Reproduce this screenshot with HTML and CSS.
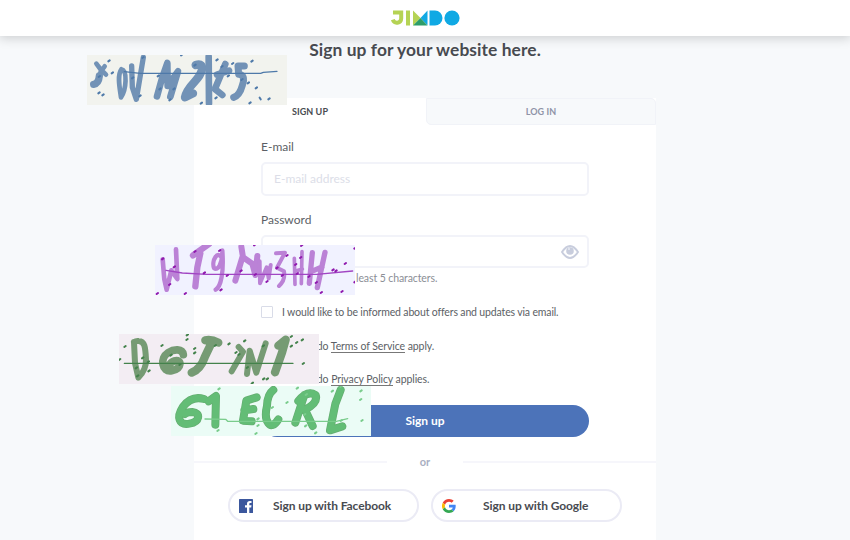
FILE: index.html
```html
<!DOCTYPE html>
<html lang="en">
<head>
<meta charset="utf-8">
<title>Jimdo</title>
<link rel="stylesheet" href="styles.css">
</head>
<body>
<header class="topbar">
<svg class="logo" viewBox="0 0 69 16" role="img" aria-label="Jimdo">
<path d="M2 2.500H10.200V8.500a4.300 4.300 0 0 1-8.400 1.200" fill="none" stroke="#b5d354" stroke-width="4"/>
<rect x="15" y=".5" width="4" height="15" fill="#b5d354"/>
<path d="M22 .5 29.500 8 22 15.500z" fill="#b5d354"/><path d="M36.500 .5V15.500L29.500 8z" fill="#10a9e4"/><path d="M29.500 8 36.500 15.500H22z" fill="#2d9d69"/>
<path d="M38.500 .5h5.500a7.500 7.500 0 0 1 0 15H38.500z" fill="#10a9e4"/><circle cx="61" cy="8" r="7.600" fill="#10a9e4"/>
</svg>
</header>
<main>
<h1><span>Sign up for your website here.</span></h1>
<section class="card">
<nav class="tabs"><a class="tab active">SIGN UP</a><a class="tab">LOG IN</a></nav>
<form class="form">
<label class="label">E-mail</label>
<div class="field"><span class="placeholder">E-mail address</span></div>
<label class="label second">Password</label>
<div class="field password"><svg class="eye" viewBox="0 0 18 14"><path d="M1 7Q9-5 17 7Q9 19 1 7Z" fill="none" stroke="#c8cddd" stroke-width="1.900"/><circle cx="9" cy="6" r="3.800" fill="#c8cddd"/><circle cx="8" cy="4" r="1" fill="#e9ebf3"/></svg></div>
<p class="hint">least 5 characters.</p>
<div class="consent"><i class="box"></i><span>I would like to be informed about offers and updates via email.</span></div>
<p class="legal terms">The Jimdo <a>Terms of Service</a> apply.</p>
<p class="legal privacy">The Jimdo <a>Privacy Policy</a> applies.</p>
<div class="submit"><span>Sign up</span></div>
</form>
<div class="or"><span>or</span></div>
<div class="social">
<div class="provider"><svg viewBox="0 0 14 14"><rect width="14" height="14" rx=".6" fill="#3b579d"/><path d="M8 14V8.500H6V6.300H8V4.700C8 3 9.100 2 10.800 2h1.700v2h-1c-.8 0-1.200.4-1.200 1v1.300h2.200L12.200 8.500h-1.900V14z" fill="#fff"/></svg><span>Sign up with Facebook</span></div>
<div class="provider google"><svg viewBox="0 0 48 48"><path fill="#ea4335" d="M24 9.500c3.540 0 6.710 1.220 9.210 3.600l6.850-6.850C35.900 2.380 30.470 0 24 0 14.620 0 6.510 5.380 2.560 13.220l7.980 6.190C12.430 13.720 17.740 9.500 24 9.500z"/><path fill="#4285f4" d="M46.980 24.550c0-1.570-.15-3.090-.38-4.550H24v9.020h12.940c-.58 2.960-2.260 5.480-4.780 7.180l7.730 6C44.400 38.020 46.980 31.840 46.980 24.550z"/><path fill="#fbbc05" d="M10.530 28.590A14.500 14.500 0 0 1 10.530 19.410L2.550 13.220a24 24 0 0 0 0 21.560z"/><path fill="#34a853" d="M24 48c6.480 0 11.930-2.130 15.890-5.810l-7.730-6c-2.150 1.450-4.920 2.300-8.160 2.300-6.260 0-11.570-4.220-13.470-9.910l-7.980 6.190C6.510 42.620 14.620 48 24 48z"/></svg><span>Sign up with Google</span></div>
</div>
</section>
</main>
<svg class="patch blue" viewBox="21 15 600 150">
<g class="brush"><path d="M49 41 61 57 78 74M74 49 62 65 58 82" stroke-width="14"/><path d="M58 78Q56 101 41 103" stroke-width="22"/><path d="M124 58C111 75 119 115 123 142C139 119 143 61 124 58"/><path d="M155 48 157 112 169 148 190 22" stroke-width="16"/><path d="M231 139 246 85 262 39 263 108 294 64 271 140" stroke-width="20"/><path d="M347 45Q371 38 365 62C359 91 322 105 315 142L339 130" stroke-width="25"/><path d="M386 20 387 160M407 112 436 42M411 74 447 62M406 118 427 135" stroke-width="20"/><path d="M493 48 474 48 476 73Q498 75 487 106Q479 136 461 142" stroke-width="21"/></g>
<path class="rule" d="M133 65 180 70H542L550 67 591 64"/>
<path class="dots" d="M85 34l4-3M95 70l4-3M56 81l4-3M55 130l4-3M67 136l4-3M156 85l4-3M178 139l4-3M187 24l4-3M303 16l4-3M233 79l4-3M238 118l4-3M280 118l4-3M268 151l4-3M343 47l4-3M362 161l4-3M409 31l4-3M424 51l4-3M443 79l4-3M406 145l4-3M456 42l4-3M514 35l4-3M484 90l4-3M503 100l4-3M527 115l4-3M508 160l4-3M539 143l3 5M565 148l4-3"/>
</svg>
<svg class="patch purple" viewBox="15 15 600 150">
<g class="brush"><path d="M38 58 43 118 50 149 64 91 82 117 78 28" stroke-width="14"/><path d="M129 46 177 12M151 40 142 82 136 139" stroke-width="19"/><path d="M218 58C203 25 184 63 192 84C204 94 217 72 217 31C222 96 213 140 197 149" stroke-width="13"/><path d="M274 20 279 52 307 71 316 105 322 48M277 52 256 122" stroke-width="18"/><path d="M329 64 330 130 350 82 356 115 362 75M378 40 405 38 381 83 402 94Q407 119 387 138" stroke-width="12"/><path d="M433 55 435 133M456 35 454 131M435 94 457 87" stroke-width="11"/><path d="M487 38 478 130M525 37 502 143M483 95 516 81" stroke-width="16"/></g>
<path class="rule" d="M48 91 97 99 170 103H500L608 93"/>
<path class="dots" d="M36 58l4-3M71 82l4-3M57 135l4-3M20 162l4-3M104 162l4-3M133 36l4-3M161 100l4-3M207 33l4-3M230 108l4-3M211 151l4-3M271 94l4-3M312 16l4-3M314 105l4-3M349 126l4-3M379 85l4-3M395 108l4-3M409 48l4-3M453 18l4-3M450 54l4-3M435 75l4-3M440 102l4-3M475 111l4-3M497 129l4-3M512 159l4-3M547 91l4-3M556 94l4-3M584 72l4-3M574 156l4-3M613 26l4-3M613 127l4-3"/>
</svg>
<svg class="patch olive" viewBox="12 12 600 150">
<g class="brush"><path d="M57 36 60 99 70 143Q94 119 93 88C91 50 89 34 71 33Q63 32 57 36" stroke-width="18"/><path d="M205 74C202 55 177 57 159 68C134 84 140 128 170 122C202 116 201 86 178 93Q168 96 165 103" stroke-width="23"/><path d="M271 31Q289 27 310 38M289 40 269 82Q257 117 230 128" stroke-width="25"/><path d="M371 51 384 65 350 124M396 132 404 62 424 128 452 40" stroke-width="18"/><path d="M490 47 512 29 501 68 480 127" stroke-width="25"/></g>
<path class="rule" d="M28 100H534"/>
<path class="dots" d="M28 51l4-3M12 90l4-3M81 85l4-3M98 97l4-3M100 124l4-3M62 115l4-3M66 139l4-3M139 48l4-3M166 77l4-3M193 105l4-3M215 16l4-3M214 30l4-3M237 57l4-3M237 70l4-3M299 48l4-3M340 43l4-3M361 69l4-3M370 75l4-3M387 34l4-3M443 49l4-3M395 114l4-3M410 161l4-3M444 148l4-3M455 148l4-3M527 21l4-3M527 50l4-3M543 39l4-3M560 31l4-3M563 102l4-3"/>
</svg>
<svg class="patch mint" viewBox="168 168 600 150">
<g class="shade"><path id="m1" d="M267 207Q230 196 204 230C183 262 192 286 223 281C255 276 258 248 232 246Q216 246 210 252"/><path id="m2" d="M281 214 303 198 301 284"/><path id="m3" d="M425 202 394 212 384 272 410 274M388 241 415 237"/><path id="m4" d="M475 180Q457 193 456 228C445 272 466 308 490 268"/><path id="m5" d="M568 195 541 278M550 213Q577 179 602 195Q610 219 570 239L593 288"/><path id="m6" d="M677 180 661 222 645 301 682 289"/></g>
<g class="brush"><use href="#m1"/><use href="#m2"/><use href="#m3"/><use href="#m4"/><use href="#m5"/><use href="#m6"/></g>
<path class="rule" d="M270 267 332 268 338 274H664L698 266"/>
<path class="dots" d="M310 178l4-3M307 303l4-3M427 268l4-3M427 288l4-3M421 312l4-3M470 234l4-3M514 219l4-3M545 176l4-3M572 195l4-3M567 255l4-3M570 289l4-3M600 310l4-3M650 185l4-3M676 171l4-3M677 273l4-3M736 184l4-3M735 210l4-3M739 273l4-3"/>
</svg>
</body>
</html>
```

FILE: styles.css
```css
* { box-sizing: border-box; }
body { margin: 0; width: 850px; height: 540px; overflow: hidden; position: relative; background: #f7f9fb; color: #5c5f66; font: 11px/16px Lato, sans-serif; }
.topbar { height: 36px; background: #fff; display: flex; justify-content: center; padding-top: 10px; box-shadow: 0 1px 12px 1px rgba(0,0,0,.18); position: relative; }
.logo { width: 69px; height: 16px; }
h1 { margin: 0; height: 62px; padding-top: 4px; font-size: 17.400px; line-height: 20px; letter-spacing: .08px; font-weight: 700; text-align: center; color: #484b51; }
.card { width: 462px; height: 460px; margin: 0 auto; background: #fff; }
.tabs { display: grid; grid-template-columns: 232px 1fr; height: 27px; }
.tab { display: flex; align-items: center; justify-content: center; font-weight: 700; font-size: 9px; letter-spacing: .08px; color: #8f94a7; background: #f7f9fb; border: 1px solid #f1f3f8; border-radius: 0 5px 0 5px; }
.tab.active { color: #484b51; background: #fff; border-color: #fff; }
.form { margin: 0 67px; padding-top: 14px; }
.label { display: block; height: 23px; font-size: 12px; }
.second { margin-top: 16px; }
.field { height: 34px; border: 2px solid #f2f3f9; border-radius: 5px; display: flex; align-items: center; padding: 0 8px 0 11px; font-size: 12px; color: #dcdee8; }
.password { justify-content: flex-end; height: 33px; }
.eye { width: 18px; height: 14px; }
.hint { margin: 2px 0 0; padding-left: 95px; color: #8b8e96; font-size: 10.500px; letter-spacing: -.1px; }
.consent { display: flex; height: 16px; margin-top: 18px; align-items: center; font-size: 10.500px; letter-spacing: -.15px; white-space: nowrap; }
.box { width: 12px; height: 12px; border: 1px solid #d9dce8; border-radius: 1px; margin-right: 9px; }
.legal { margin: 0; padding-left: 21px; font-size: 10.500px; letter-spacing: -.1px; word-spacing: .1px; }
.legal a { border-bottom: 1px solid #777; }
.terms { margin-top: 18px; }
.privacy { margin-top: 17px; }
.submit { height: 32px; margin-top: 18px; border-radius: 16px; background: #4c73b9; color: #fff; font-size: 12px; font-weight: 700; display: flex; align-items: center; justify-content: center; }
.or { display: flex; align-items: center; height: 16px; margin-top: 17px; font-size: 11px; font-weight: 700; color: #a9afc2; }
.or::before, .or::after { content: ""; flex: 1; height: 2px; background: #f6f6fb; }
.or span { width: 76px; text-align: center; }
.social { display: flex; justify-content: center; gap: 12px; margin-top: 19px; }
.provider { width: 191px; height: 33px; border: 2px solid #ebebf5; border-radius: 17px; display: flex; align-items: center; padding-left: 9px; font-size: 12px; letter-spacing: -.08px; font-weight: 700; color: #484b51; white-space: nowrap; }
.provider svg { width: 14px; height: 14px; margin-right: 20px; }
.provider.google svg { margin-right: 27px; }
.patch { position: absolute; width: 200px; height: 50px; }
.patch path { fill: none; stroke-linecap: round; stroke-linejoin: round; }
.brush, .shade { stroke-width: 14px; fill: none; stroke-linecap: round; stroke-linejoin: round; }
.patch .rule { stroke-width: 4px; }
.patch .dots { stroke-width: 6px; }
.blue { left: 87px; top: 55px; background: #f2f3ee; stroke: #7292b6; }
.blue .rule, .blue .dots { stroke: #4e79a9; }
.purple { left: 155px; top: 245px; background: #f1f2ff; stroke: #bb82d6; }
.purple .rule { stroke: #a145c3; }
.purple .dots { stroke: #8f18ae; }
.olive { left: 119px; top: 334px; background: #f3edf3; stroke: #769b74; }
.olive .rule, .olive .dots { stroke: #43824b; }
.mint { left: 171px; top: 386px; background: #ebfcf6; stroke: #63bd76; }
.mint .brush { stroke-width: 20px; }
.mint .shade { stroke: #64ad70; stroke-width: 24px; }
.mint .rule, .mint .dots { stroke: #7acc8c; }
```
